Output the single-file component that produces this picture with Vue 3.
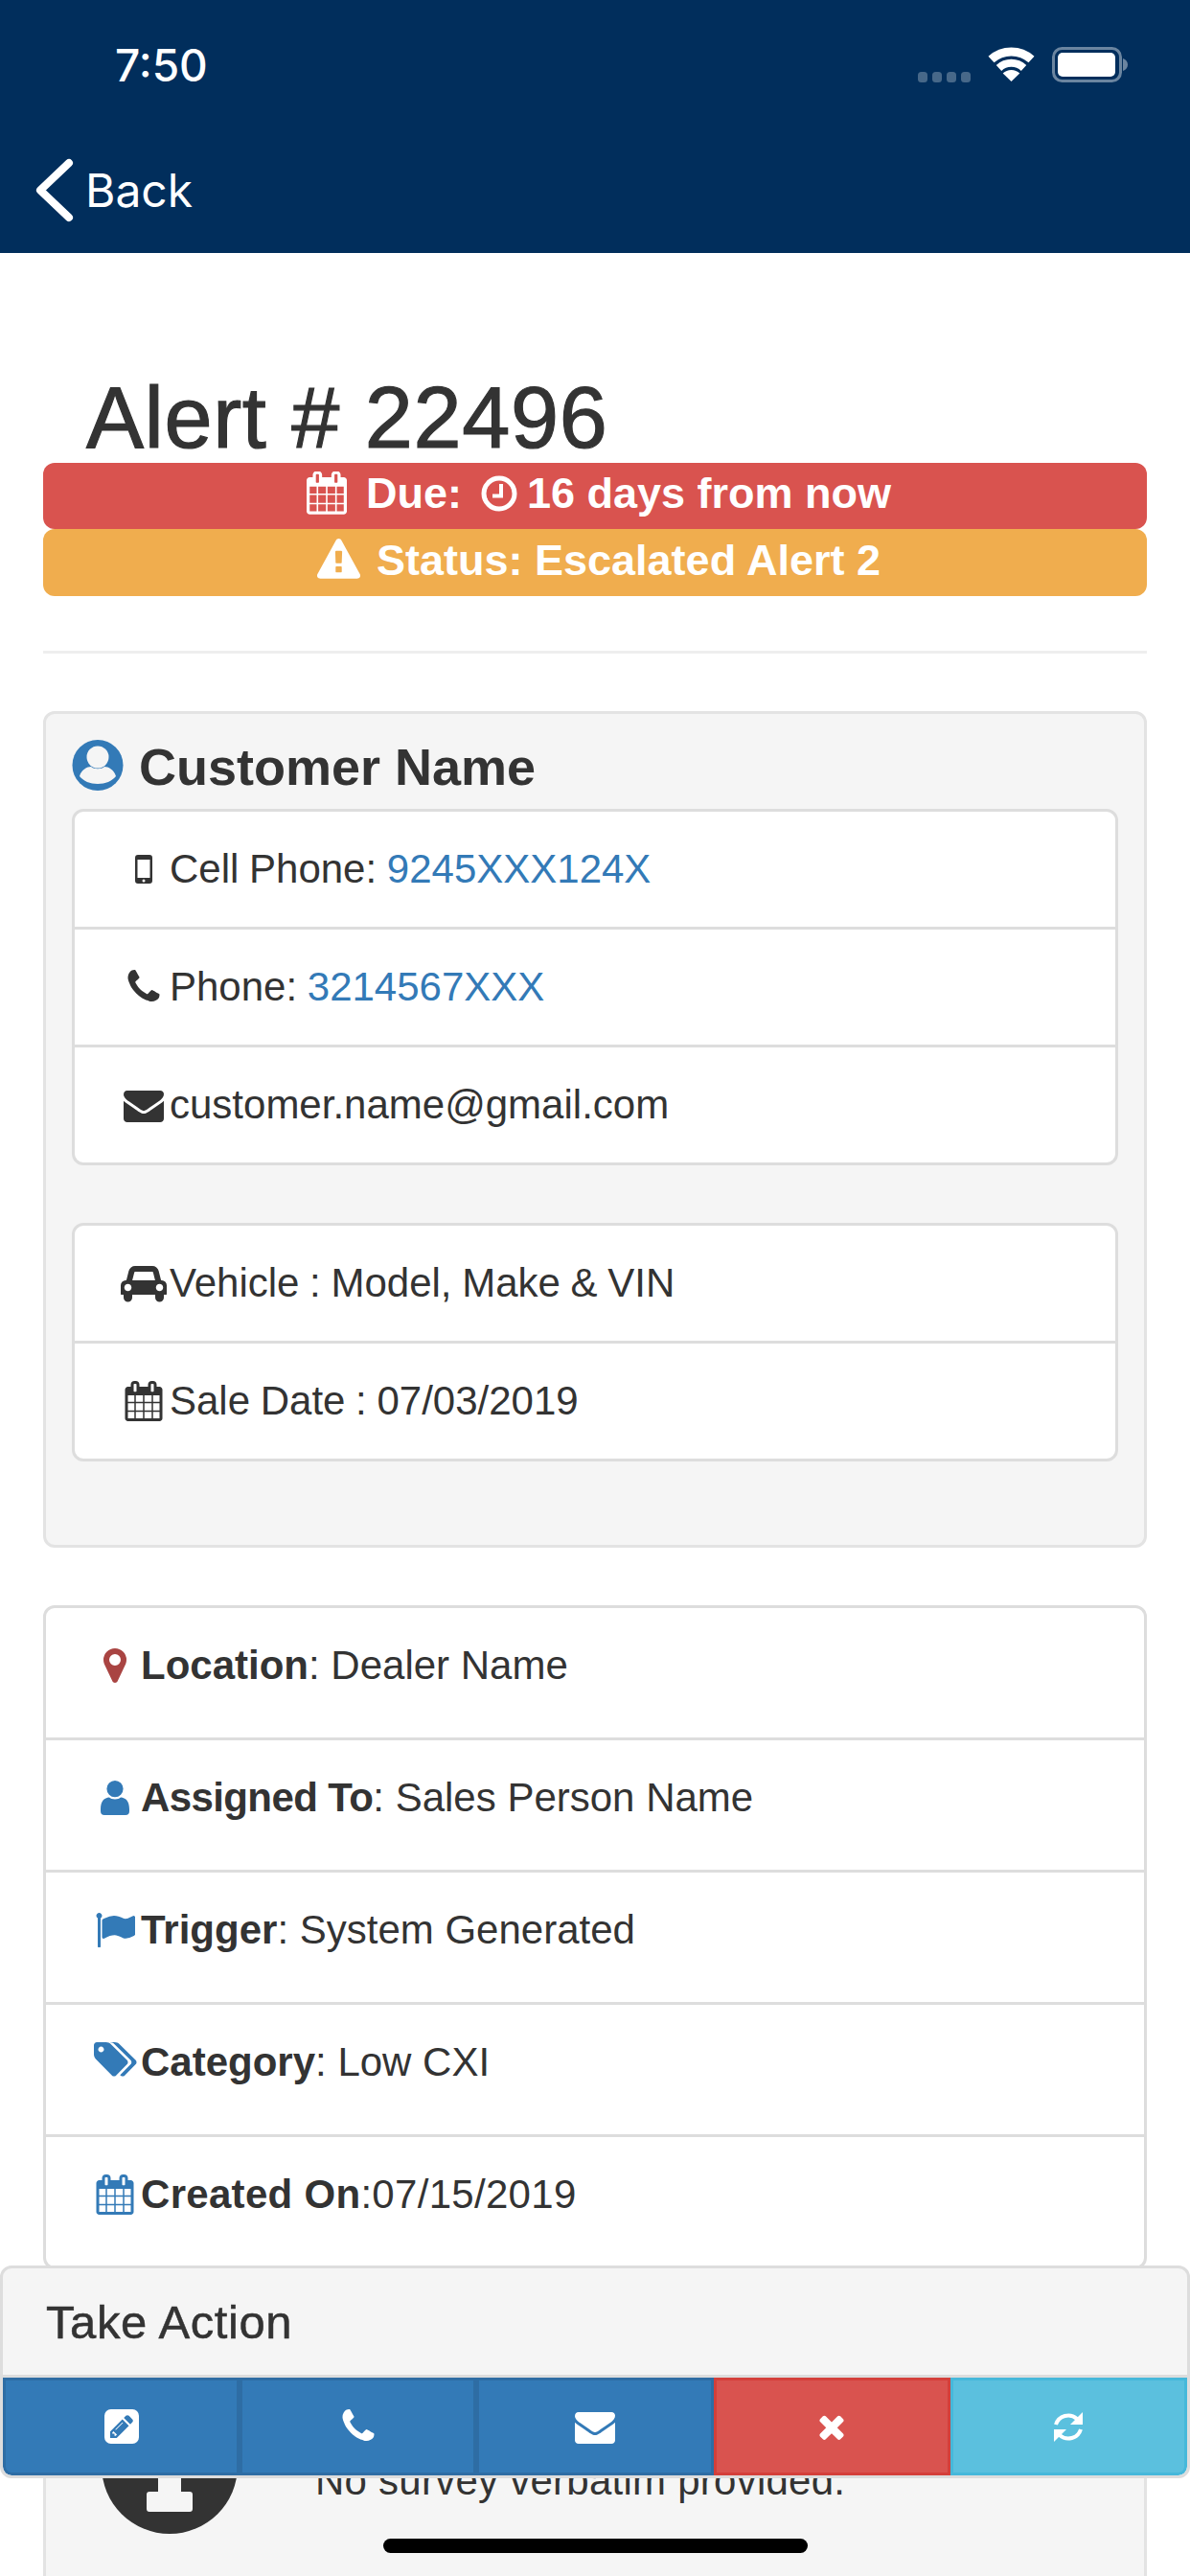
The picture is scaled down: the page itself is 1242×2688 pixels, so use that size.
<script setup>
const fa = (d, w = 1792) => ({ d, vb: `0 0 ${w} 1792`, w: (w * 42) / 1792, h: 42 })
const icons = {
  envelope: fa('M1792 710v794q0 66-47 113t-113 47h-1472q-66 0-113-47t-47-113v-794q44 49 101 87 362 246 497 345 57 42 92.5 65.5t94.5 48 110 24.5h2q51 0 110-24.5t94.5-48 92.5-65.5q170-123 498-345 57-39 100-87zm0-294q0 79-49 151t-122 123q-376 261-468 325-10 7-42.5 30.5t-54 38-52 32.5-57.5 27-50 9h-2q-23 0-50-9t-57.5-27-52-32.5-54-38-42.5-30.5q-91-64-262-182.5t-205-142.5q-62-42-117-115.5t-55-136.5q0-78 41.5-130t118.5-52h1472q65 0 112.5 47t47.5 113z'),
  phone: fa('M1600 1240q0 27-10 70.5t-21 68.5q-21 50-122 106-94 51-186 51-27 0-53-3.5t-57.5-12.5-47-14.5-55.5-20.5-49-18q-98-35-175-83-127-79-264-216t-216-264q-48-77-83-175-3-9-18-49t-20.5-55.5-14.5-47-12.5-57.5-3.5-53q0-92 51-186 56-101 106-122 25-11 68.5-21t70.5-10q14 0 21 3 18 6 53 76 11 19 30 54t35 63.5 31 53.5q3 4 17.5 25t21.5 35.5 7 28.5q0 20-28.5 50t-62 55-62 53-28.5 46q0 9 5 22.5t8.5 20.5 14 24 11.5 19q76 137 174 235t235 174q2 1 19 11.5t24 14 20.5 8.5 22.5 5q18 0 46-28.5t53-62 55-62 50-28.5q14 0 28.5 7t35.5 21.5 25 17.5q25 15 53.5 31t63.5 35 54 30q70 35 76 53 3 7 3 21z'),
  times: fa('M1490 1322q0 40-28 68l-136 136q-28 28-68 28t-68-28l-294-294-294 294q-28 28-68 28t-68-28l-136-136q-28-28-28-68t28-68l294-294-294-294q-28-28-28-68t28-68l136-136q28-28 68-28t68 28l294 294 294-294q28-28 68-28t68 28l136 136q28 28 28 68t-28 68l-294 294 294 294q28 28 28 68z'),
  edit: fa('M532 1108l152 152-52 52h-56v-96h-96v-56zm414-390q14 13-3 30l-291 291q-17 17-30 3-14-13 3-30l291-291q17-17 30-3zm-274 690l544-544-288-288-544 544v288h288zm608-608l92-92q28-28 28-68t-28-68l-152-152q-28-28-68-28t-68 28l-92 92zm384-384v960q0 119-84.5 203.5t-203.5 84.5h-960q-119 0-203.5-84.5t-84.5-203.5v-960q0-119 84.5-203.5t203.5-84.5h960q119 0 203.5 84.5t84.5 203.5z'),
  calendar: fa('M192 1664h288v-288h-288v288zm352 0h320v-288h-320v288zm-352-352h288v-320h-288v320zm352 0h320v-320h-320v320zm-352-384h288v-288h-288v288zm736 736h320v-288h-320v288zm-384-736h320v-288h-320v288zm768 736h288v-288h-288v288zm-384-352h320v-320h-320v320zm-352-864v-288q0-13-9.5-22.5t-22.5-9.5h-64q-13 0-22.5 9.5t-9.5 22.5v288q0 13 9.5 22.5t22.5 9.5h64q13 0 22.5-9.5t9.5-22.5zm736 864h288v-320h-288v320zm-384-384h320v-288h-320v288zm384 0h288v-288h-288v288zm32-480v-288q0-13-9.5-22.5t-22.5-9.5h-64q-13 0-22.5 9.5t-9.5 22.5v288q0 13 9.5 22.5t22.5 9.5h64q13 0 22.5-9.5t9.5-22.5zm384-64v1280q0 52-38 90t-90 38h-1408q-52 0-90-38t-38-90v-1280q0-52 38-90t90-38h128v-96q0-66 47-113t113-47h64q66 0 113 47t47 113v96h384v-96q0-66 47-113t113-47h64q66 0 113 47t47 113v96h128q52 0 90 38t38 90z'),
  warning: fa('M1024 1375v-190q0-14-9.5-23.5t-22.5-9.5h-192q-13 0-22.5 9.5t-9.5 23.5v190q0 14 9.5 23.5t22.5 9.5h192q13 0 22.5-9.5t9.5-23.5zm-2-374l18-459q0-12-10-19-13-11-24-11h-220q-11 0-24 11-10 7-10 21l17 457q0 10 10 16.5t24 6.5h185q14 0 23.5-6.5t10.5-16.5zm-14-934l768 1408q35 63-2 126-17 29-46.5 46t-63.5 17h-1536q-34 0-63.5-17t-46.5-46q-37-63-2-126l768-1408q17-31 47-49t65-18 65 18 47 49z'),
  marker: fa('M768 640q0-106-75-181t-181-75-181 75-75 181 75 181 181 75 181-75 75-181zm256 0q0 109-33 179l-364 774q-16 33-47.5 52t-67.5 19-67.5-19-46.5-52l-365-774q-33-70-33-179 0-212 150-362t362-150 362 150 150 362z', 1024),
  flag: fa('M320 256q0 72-64 110v1266q0 13-9.5 22.5t-22.5 9.5h-64q-13 0-22.5-9.5t-9.5-22.5v-1266q-64-38-64-110 0-53 37.5-90.5t90.5-37.5 90.5 37.5 37.5 90.5zm1472 64v763q0 25-12.5 38.5t-39.5 27.5q-215 116-369 116-61 0-123.5-22t-108.5-48-115.5-48-142.5-22q-192 0-464 146-17 9-33 9-26 0-45-19t-19-45v-742q0-32 31-55 21-14 79-43 236-120 421-120 107 0 200 29t219 88q38 19 88 19 54 0 117.5-21t110-47 88-47 54.5-21q26 0 45 19t19 45z'),
  tags: fa('M448 320q0-53-37.5-90.5t-90.5-37.5-90.5 37.5-37.5 90.5 37.5 90.5 90.5 37.5 90.5-37.5 37.5-90.5zm1067 576q0 53-37 90l-491 492q-39 37-91 37-53 0-90-37l-715-716q-38-37-64.5-101t-26.5-117v-416q0-52 38-90t90-38h416q53 0 117 26.5t102 64.5l715 714q37 39 37 91zm384 0q0 53-37 90l-491 492q-39 37-91 37-36 0-59-14t-53-45l470-470q37-37 37-90 0-52-37-91l-715-714q-38-38-102-64.5t-117-26.5h224q53 0 117 26.5t102 64.5l715 714q37 39 37 91z', 1920),
  car: fa('M480 1088q0-66-47-113t-113-47-113 47-47 113 47 113 113 47 113-47 47-113zm36-320h1016l-89-357q-2-8-14-17.5t-21-9.5h-768q-9 0-21 9.5t-14 17.5zm1372 320q0-66-47-113t-113-47-113 47-47 113 47 113 113 47 113-47 47-113zm160-96v384q0 14-9 23t-23 9h-96v128q0 80-56 136t-136 56-136-56-56-136v-128h-1024v128q0 80-56 136t-136 56-136-56-56-136v-128h-96q-14 0-23-9t-9-23v-384q0-93 65.5-158.5t158.5-65.5h28l105-419q23-94 104-157.5t179-63.5h768q98 0 179 63.5t104 157.5l105 419h28q93 0 158.5 65.5t65.5 158.5z', 2048),
  mobile: { d: 'M3 0h12a3 3 0 0 1 3 3v24a3 3 0 0 1-3 3H3a3 3 0 0 1-3-3V3a3 3 0 0 1 3-3zM2.5 5v19h13V5zM9 25.5a1.5 1.5 0 1 0 0 3 1.5 1.5 0 0 0 0-3z', vb: '0 0 18 30', w: 18, h: 30 },
  user: { d: 'M15 0a8.6 8.6 0 1 1 0 17.2 8.6 8.6 0 0 1 0-17.2zM9 17.5C11 20 19 20 21 17.5C26 18 30 21 30 30v2a4 4 0 0 1-4 4H4a4 4 0 0 1-4-4v-2C0 21 4 18 9 17.5z', vb: '0 0 30 36', w: 30, h: 36 },
}

const contactRows = [
  { icon: 'mobile', label: 'Cell Phone: ', link: '9245XXX124X' },
  { icon: 'phone', label: 'Phone: ', link: '3214567XXX' },
  { icon: 'envelope', label: 'customer.name@gmail.com' },
]
const vehicleRows = [
  { icon: 'car', label: 'Vehicle : Model, Make & VIN' },
  { icon: 'calendar', label: 'Sale Date : 07/03/2019' },
]
const detailRows = [
  { icon: 'marker', tone: 'red', bold: 'Location', value: ': Dealer Name' },
  { icon: 'user', tone: 'blue', bold: 'Assigned To', value: ': Sales Person Name', fit: 'tight' },
  { icon: 'flag', tone: 'blue', bold: 'Trigger', value: ': System Generated' },
  { icon: 'tags', tone: 'blue', bold: 'Category', value: ': Low CXI' },
  { icon: 'calendar', tone: 'blue', bold: 'Created On', value: ':07/15/2019', fit: 'wide' },
]
const actions = [
  { icon: 'edit', tone: 'primary' },
  { icon: 'phone', tone: 'primary' },
  { icon: 'envelope', tone: 'primary' },
  { icon: 'times', tone: 'danger' },
]
</script>

<template>
  <div class="screen">
    <header class="top">
      <div class="status">
        <span class="time">7:50</span>
        <svg class="status-icons" width="219" height="38" viewBox="0 0 219 38">
          <g fill="#fff" fill-opacity=".28">
            <rect x="0" y="26" width="10" height="11" rx="3.5" />
            <rect x="15" y="26" width="10" height="11" rx="3.5" />
            <rect x="30" y="26" width="10" height="11" rx="3.5" />
            <rect x="45" y="26" width="10" height="11" rx="3.5" />
          </g>
          <g fill="none" stroke="#fff">
            <path d="M76.5 13A31.5 31.5 0 0 1 118.5 13" stroke-width="9" />
            <path d="M84.5 22A19 19 0 0 1 110.5 22" stroke-width="8" />
          </g>
          <path d="M97.5 36L88.7 27.5A12.5 12.5 0 0 1 106.3 27.5Z" fill="#fff" />
          <rect x="141.5" y="1.5" width="70" height="34" rx="9" fill="none" stroke="#fff" stroke-opacity=".42" stroke-width="3" />
          <rect x="146" y="6" width="60" height="25" rx="5" fill="#fff" />
          <path d="M214 12c3 1 5 3.500 5 6.500s-2 5.500-5 6.500z" fill="#fff" fill-opacity=".42" />
        </svg>
      </div>
      <div class="nav">
        <svg class="chevron" width="42" height="68" viewBox="0 0 42 68">
          <path d="M36 5L6 33.500L36 62" fill="none" stroke="#fff" stroke-width="8" stroke-linecap="round" stroke-linejoin="round" />
        </svg>
        <span class="back">Back</span>
      </div>
    </header>

    <main class="page">
      <h1 class="title">Alert # 22496</h1>
      <div class="bar bar-red">
        <svg class="bar-cal" viewBox="64 64 1664 1728" width="42" height="46"><path :d="icons.calendar.d" /></svg>
        <span class="due">Due:</span>
        <svg class="bar-clock" width="38" height="38" viewBox="0 0 38 38">
          <circle cx="19" cy="19" r="16" fill="none" stroke="#fff" stroke-width="5" />
          <path d="M21 9v12.500h-9" fill="none" stroke="#fff" stroke-width="4" />
        </svg>
        <span>16 days from now</span>
      </div>
      <div class="bar bar-orange">
        <svg class="bar-warn" :viewBox="icons.warning.vb" width="45" height="45"><path :d="icons.warning.d" /></svg>
        <span>Status: Escalated Alert 2</span>
      </div>
      <hr class="rule" />

      <section class="well">
        <h3 class="customer">
          <svg width="54" height="54" viewBox="0 0 54 54">
            <circle cx="27" cy="26.500" r="26.500" fill="#337ab7" />
            <path d="M8 38C10 31 16 28 20 28C23 31 31 31 34 28C38 28 44 31 46 38C42 43 35 46 27 46C19 46 12 43 8 38Z" fill="#f5f5f5" />
            <circle cx="27" cy="18" r="11.500" fill="#f5f5f5" />
          </svg>
          <span>Customer Name</span>
        </h3>
        <ul class="list">
          <li v-for="row in contactRows" :key="row.icon" class="item">
            <span class="ico"><svg :viewBox="icons[row.icon].vb" :width="icons[row.icon].w" :height="icons[row.icon].h" class="dark"><path :d="icons[row.icon].d" /></svg></span>
            <span>{{ row.label }}<a v-if="row.link" class="link">{{ row.link }}</a></span>
          </li>
        </ul>
        <ul class="list">
          <li v-for="row in vehicleRows" :key="row.icon" class="item">
            <span class="ico"><svg :viewBox="icons[row.icon].vb" :width="icons[row.icon].w" :height="icons[row.icon].h" class="dark"><path :d="icons[row.icon].d" /></svg></span>
            <span>{{ row.label }}</span>
          </li>
        </ul>
      </section>

      <ul class="list details">
        <li v-for="row in detailRows" :key="row.bold" class="item detail">
          <span class="ico"><svg :viewBox="icons[row.icon].vb" :width="icons[row.icon].w" :height="icons[row.icon].h" :class="row.tone"><path :d="icons[row.icon].d" /></svg></span>
          <span :class="row.fit"><b>{{ row.bold }}</b>{{ row.value }}</span>
        </li>
      </ul>

      <section class="well survey">
        <svg class="avatar" width="142" height="142" viewBox="0 0 142 142">
          <circle cx="71" cy="71" r="71" fill="#333" />
          <path d="M59 70h24v28h9a3 3 0 0 1 3 3v15a3 3 0 0 1-3 3H50a3 3 0 0 1-3-3v-15a3 3 0 0 1 3-3h9z" fill="#f5f5f5" />
        </svg>
        <p class="verbatim">No survey verbatim provided.</p>
      </section>
    </main>

    <footer class="actions">
      <div class="actions-head">Take Action</div>
      <div class="btns">
        <button v-for="(a, i) in actions" :key="i" type="button" class="btn" :class="a.tone">
          <svg :viewBox="icons[a.icon].vb" :width="icons[a.icon].w" :height="icons[a.icon].h"><path :d="icons[a.icon].d" /></svg>
        </button>
        <button type="button" class="btn info">
          <svg width="32" height="33" viewBox="0 0 32 33">
            <g fill="none" stroke="#fff" stroke-width="4">
              <path d="M3 14A13.500 13.500 0 0 1 25 8" />
              <path d="M29 19A13.500 13.500 0 0 1 7 25" />
            </g>
            <path d="M31 1V14H18Z" />
            <path d="M1 32V19H14Z" />
          </svg>
        </button>
      </div>
    </footer>
    <div class="home"></div>
  </div>
</template>

<style>
html, body { margin: 0; padding: 0; background: #fff; }
</style>

<style scoped>
* { box-sizing: border-box; }
.screen {
  position: relative;
  width: 1242px;
  height: 2688px;
  overflow: hidden;
  background: #fff;
  color: #333;
  font-family: "Liberation Sans", Arial, sans-serif;
  font-size: 42px;
  line-height: 60px;
  word-spacing: -1px;
}
.top {
  height: 264px;
  padding-top: 44px;
  background: #012e5c;
  color: #fff;
  font-family: Inter, "Liberation Sans", sans-serif;
}
.status {
  display: flex;
  justify-content: space-between;
  padding: 0 65px 0 120px;
  height: 48px;
}
.time { font-size: 46px; font-weight: 500; line-height: 48px; }
.status-icons { margin-top: 5px; }
.nav {
  display: flex;
  align-items: center;
  gap: 11px;
  margin-top: 73px;
  padding-left: 36px;
}
.back { font-size: 48px; line-height: 60px; }
.page { padding: 126px 45px 0; }
.title {
  margin: 0;
  padding-left: 45px;
  font-size: 90px;
  font-weight: 400;
  line-height: 93px;
  letter-spacing: .7px;
  word-spacing: 0;
  -webkit-text-stroke: 1.2px #333;
}
.bar {
  display: flex;
  align-items: center;
  justify-content: center;
  height: 69px;
  padding: 0 0 6px 8px;
  border-radius: 12px;
  color: #fff;
  font-size: 45px;
  font-weight: 700;
  line-height: 63px;
  word-spacing: 0;
}
.bar svg { fill: #fff; flex: none; }
.bar-red { background: #d9534f; }
.bar-orange { height: 70px; background: #f0ad4e; }
.bar-cal { margin-right: 20px; }
.due { margin-right: 20px; }
.bar-clock { margin-right: 10px; }
.bar-warn { margin-right: 17px; }
.rule {
  height: 3px;
  margin: 57px 0 60px;
  border: 0;
  background: #eee;
}
.well {
  margin-bottom: 60px;
  padding: 27px;
  border: 3px solid #e3e3e3;
  border-radius: 12px;
  background: #f5f5f5;
}
.customer {
  display: flex;
  align-items: flex-start;
  gap: 16px;
  margin: 0 0 16px;
  font-size: 54px;
  font-weight: 700;
  line-height: 56px;
  word-spacing: 0;
}
.list {
  margin: 0 0 60px;
  padding: 0;
  list-style: none;
  border: 3px solid #ddd;
  border-radius: 12px;
  background: #fff;
}
.item {
  display: flex;
  padding: 30px 45px;
}
.item + .item { border-top: 3px solid #ddd; }
.ico {
  display: flex;
  flex: none;
  align-items: center;
  justify-content: center;
  width: 54px;
  height: 60px;
}
.dark { fill: #333; }
.red { fill: #a94442; }
.blue { fill: #337ab7; }
.link { color: #337ab7; word-spacing: 0; }
.details { word-spacing: 0; }
.details .detail { padding-bottom: 45px; }
.tight b { letter-spacing: -.6px; }
.wide { letter-spacing: .3px; }
.survey {
  display: flex;
  gap: 81px;
  height: 400px;
  padding: 71px 0 0 58px;
}
.avatar { flex: none; }
.verbatim {
  margin: 57px 0 0;
  letter-spacing: .25px;
  word-spacing: 0;
}
.actions {
  position: absolute;
  top: 2364px;
  left: 0;
  width: 1242px;
  height: 222px;
  border: 3px solid #ddd;
  border-radius: 12px;
  background: #f5f5f5;
  overflow: hidden;
}
.actions-head {
  height: 114px;
  padding: 30px 45px;
  border-bottom: 3px solid #ddd;
  font-size: 49px;
  line-height: 53px;
  letter-spacing: .6px;
  word-spacing: 0;
  -webkit-text-stroke: .5px #333;
}
.btns { display: flex; height: 102px; }
.btn {
  display: flex;
  flex: 1 1 0;
  align-items: center;
  justify-content: center;
  padding: 0;
  border: 3px solid;
  fill: #fff;
}
.btn:first-child { border-radius: 0 0 0 9px; }
.btn:last-child { border-radius: 0 0 9px 0; }
.btn.primary { background: #337ab7; border-color: #2e6da4; }
.btn.danger { background: #d9534f; border-color: #d43f3a; }
.btn.danger svg { width: 38px; height: 38px; }
.btn.info { background: #5bc0de; border-color: #46b8da; }
.home {
  position: absolute;
  top: 2649px;
  left: 400px;
  width: 443px;
  height: 15px;
  border-radius: 8px;
  background: #000;
}
</style>
